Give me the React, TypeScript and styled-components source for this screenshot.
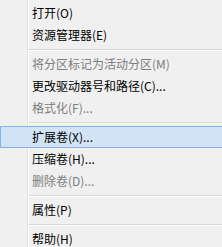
import React from "react";
import styled, { createGlobalStyle } from "styled-components";

const GlobalStyle = createGlobalStyle`
  html, body {
    margin: 0;
    padding: 0;
    background: #f0f0f0;
    overflow: hidden;
  }
`;

type Entry =
  | { kind: "item"; label: string; disabled?: boolean; active?: boolean }
  | { kind: "sep" };

const entries: Entry[] = [
  { kind: "item", label: "打开(O)" },
  { kind: "item", label: "资源管理器(E)" },
  { kind: "sep" },
  { kind: "item", label: "将分区标记为活动分区(M)", disabled: true },
  { kind: "item", label: "更改驱动器号和路径(C)..." },
  { kind: "item", label: "格式化(F)...", disabled: true },
  { kind: "sep" },
  { kind: "item", label: "扩展卷(X)...", active: true },
  { kind: "item", label: "压缩卷(H)..." },
  { kind: "item", label: "删除卷(D)...", disabled: true },
  { kind: "sep" },
  { kind: "item", label: "属性(P)" },
  { kind: "sep" },
  { kind: "item", label: "帮助(H)" },
];

const Menu = styled.div`
  width: 100%;
  padding-top: 2px;
  background: linear-gradient(
    to right,
    transparent 27px,
    #e2e2e2 27px,
    #e2e2e2 28px,
    #ffffff 28px,
    #ffffff 29px,
    transparent 29px
  );
  font-family: "Microsoft YaHei UI", "Noto Sans CJK SC", "Liberation Sans", sans-serif;
  font-size: 12px;
`;

const Item = styled.div<{ $disabled?: boolean; $active?: boolean }>`
  box-sizing: border-box;
  height: 22px;
  display: flex;
  align-items: center;
  padding-left: ${({ $active }) => ($active ? 31 : 32)}px;
  color: ${({ $disabled }) => ($disabled ? "#7d7d7d" : "#000000")};
  background: ${({ $active }) => ($active ? "#d1e3f4" : "transparent")};
  border: ${({ $active }) => ($active ? "1px solid #7eb4ea" : "none")};
  border-right: none;
  white-space: nowrap;
  overflow: hidden;
  line-height: 1;
`;

const Separator = styled.div`
  margin-left: 29px;
  padding: 3px 0 2px;
`;

const SepLine = styled.div`
  height: 1px;
  background: #d7d7d7;
  border-bottom: 1px solid #ffffff;
`;

export default function App() {
  return (
    <>
      <GlobalStyle />
      <Menu>
        {entries.map((e, i) =>
          e.kind === "sep" ? (
            <Separator key={i}>
              <SepLine />
            </Separator>
          ) : (
            <Item key={i} $disabled={e.disabled} $active={e.active}>
              {e.label}
            </Item>
          )
        )}
      </Menu>
    </>
  );
}
